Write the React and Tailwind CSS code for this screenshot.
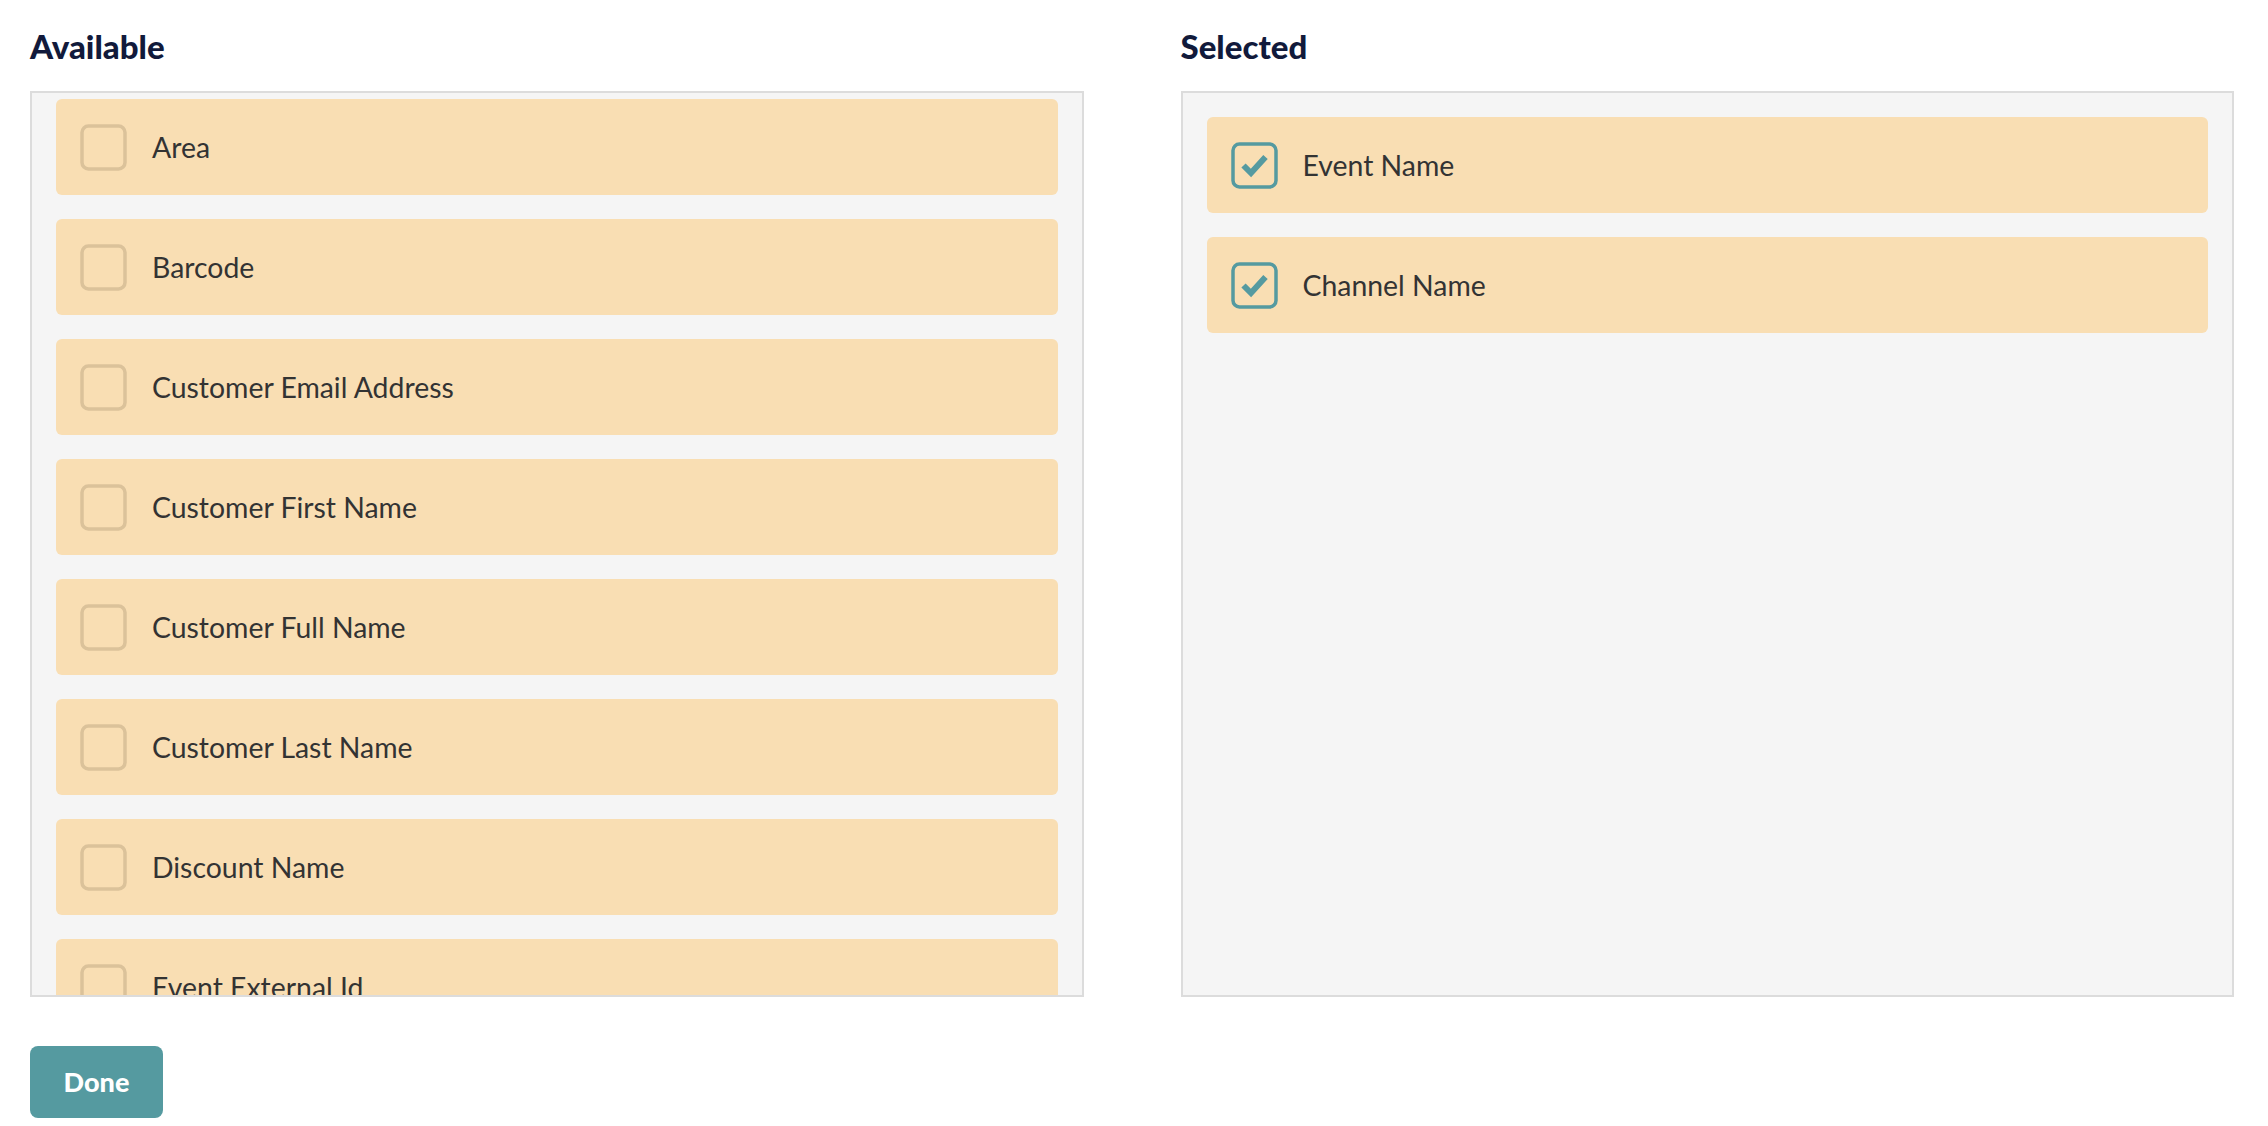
import React from "react";

const available = [
  "Area",
  "Barcode",
  "Customer Email Address",
  "Customer First Name",
  "Customer Full Name",
  "Customer Last Name",
  "Discount Name",
  "Event External Id",
  "Event Id",
];

const selected = ["Event Name", "Channel Name"];

function Box({ checked }) {
  return (
    <svg width="47" height="47" viewBox="0 0 47 47" className="shrink-0">
      <rect
        x="2"
        y="2"
        width="43"
        height="43"
        rx="6.5"
        fill="none"
        stroke={checked ? "#559aa0" : "#dbc29a"}
        strokeWidth="3.5"
      />
      {checked && (
        <polyline
          points="12.5,23.5 20,31 34.5,15"
          fill="none"
          stroke="#559aa0"
          strokeWidth="6"
          strokeLinejoin="miter"
        />
      )}
    </svg>
  );
}

function Item({ label, checked }) {
  return (
    <div className="flex h-[96px] shrink-0 items-center gap-[25px] rounded-[6px] bg-[#f9deb3] px-6">
      <Box checked={checked} />
      <span className="text-[28.4px] leading-none text-[#333333]">{label}</span>
    </div>
  );
}

function Column({ title, items, checked, offset }) {
  return (
    <div className="flex flex-col">
      <h2 className="mb-[25px] text-[33px] font-black leading-[40px] text-[#111a3b]">{title}</h2>
      <div className="h-[906px] overflow-hidden border-2 border-[#dcdcdc] bg-[#f5f5f5]">
        <div className={`flex flex-col gap-6 p-6 ${offset ? "mt-[-18px]" : ""}`}>
          {items.map((it) => (
            <Item key={it} label={it} checked={checked} />
          ))}
        </div>
      </div>
    </div>
  );
}

export default function App() {
  return (
    <div
      className="min-h-[1126px] bg-white pl-[30px] pr-[34px] pt-[26px]"
      style={{ fontFamily: "Lato, 'Noto Sans', sans-serif" }}
    >
      <div className="grid grid-cols-2 gap-[97px]">
        <Column title="Available" items={available} checked={false} offset />
        <Column title="Selected" items={selected} checked />
      </div>
      <button className="mt-[49px] flex h-[72px] w-[133px] items-center justify-center rounded-[8px] bg-[#559aa0] text-[27px] font-black text-white">
        Done
      </button>
    </div>
  );
}
